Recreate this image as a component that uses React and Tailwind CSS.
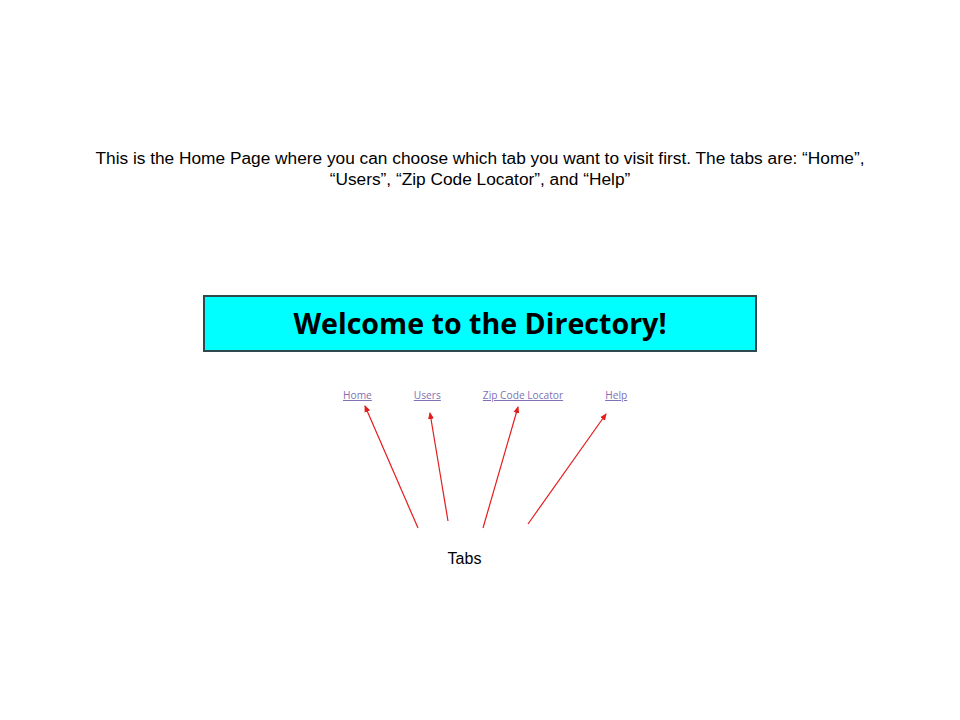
const tabs = ['Home', 'Users', 'Zip Code Locator', 'Help'];

// arrows drawn from the "Tabs" label up to each link
const arrows = [
  { x1: 418, y1: 527, x2: 365, y2: 405 },
  { x1: 448, y1: 520, x2: 430, y2: 412 },
  { x1: 483, y1: 527, x2: 518, y2: 406 },
  { x1: 528, y1: 523, x2: 606, y2: 413 },
];

const ARROW_TOP = 402;

function Arrows() {
  return (
    <svg width="960" height="130" viewBox={`0 ${ARROW_TOP} 960 130`} className="block">
      <defs>
        <marker id="head" markerWidth="8" markerHeight="8" refX="6" refY="4" orient="auto" markerUnits="userSpaceOnUse">
          <path d="M0,1 L7,4 L0,7 Z" fill="#e31c1c" />
        </marker>
      </defs>
      {arrows.map((a, i) => (
        <line
          key={i}
          x1={a.x1}
          y1={a.y1}
          x2={a.x2}
          y2={a.y2}
          stroke="#e31c1c"
          strokeWidth="1.2"
          markerEnd="url(#head)"
        />
      ))}
    </svg>
  );
}

export default function App() {
  return (
    <div className="w-[960px] h-[720px] bg-white overflow-hidden font-['Liberation_Sans',Arial,sans-serif]">
      <p className="pt-[148px] px-[90px] text-center text-[17.3px] leading-[21px] text-black">
        This is the Home Page where you can choose which tab you want to visit first. The tabs are: “Home”, “Users”, “Zip Code Locator”, and “Help”
      </p>

      <div className="mt-[105px] ml-[203px] w-[554px] h-[57px] bg-[#00ffff] border-2 border-[#2f4a4f] flex items-center justify-center">
        <h1 className="font-['Open_Sans','Noto_Sans',sans-serif] font-bold text-[28.6px] text-black leading-none">
          Welcome to the Directory!
        </h1>
      </div>

      <nav className="mt-[35px] h-[16px] flex items-center pl-[343px] gap-[42px] font-['Open_Sans','Noto_Sans',sans-serif] text-[10.2px]">
        {tabs.map((t) => (
          <a key={t} href="#" className="text-[#8170b5] underline leading-none">
            {t}
          </a>
        ))}
      </nav>

      <Arrows />

      <div className="mt-[16px] text-center text-[16px] leading-[20px] text-black pr-[31px]">Tabs</div>
    </div>
  );
}
